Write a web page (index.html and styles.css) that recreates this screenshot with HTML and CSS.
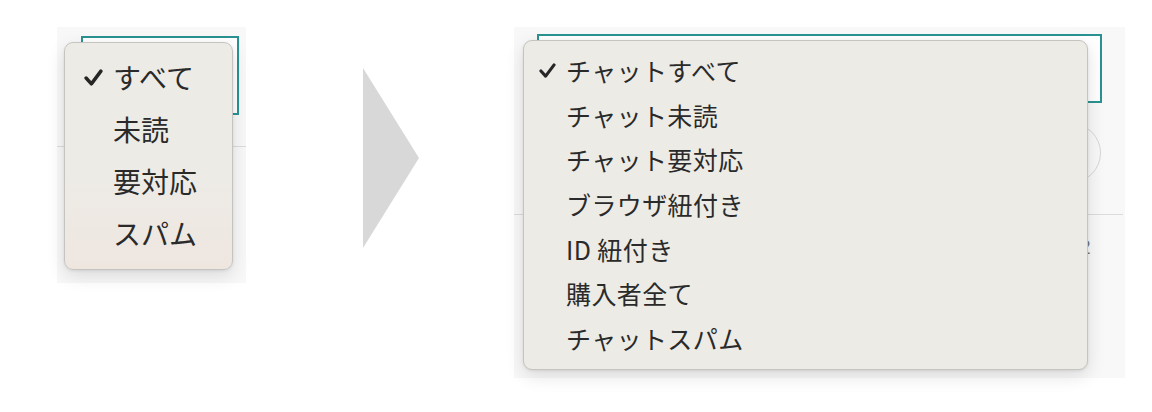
FILE: index.html
```html
<!DOCTYPE html>
<html lang="ja">
<head>
<meta charset="utf-8">
<title>Filter menu</title>
<link rel="stylesheet" href="styles.css">
</head>
<body>
<div class="stage">
  <div class="shot shot-left">
    <div class="field"></div>
    <div class="rule"></div>
    <ul class="menu">
      <li class="item checked"><svg class="check" viewBox="0 0 18 16"><polyline points="2,8.5 7,14 16,2"/></svg>すべて</li>
      <li class="item">未読</li>
      <li class="item">要対応</li>
      <li class="item">スパム</li>
    </ul>
  </div>
  <div class="arrow"></div>
  <div class="shot shot-right">
    <div class="field"></div>
    <div class="circle"></div>
    <div class="rule"></div>
    <span class="count">2</span>
    <ul class="menu">
      <li class="item checked"><svg class="check" viewBox="0 0 18 16"><polyline points="2,8.5 7,14 16,2"/></svg>チャットすべて</li>
      <li class="item">チャット未読</li>
      <li class="item">チャット要対応</li>
      <li class="item">ブラウザ紐付き</li>
      <li class="item">ID 紐付き</li>
      <li class="item">購入者全て</li>
      <li class="item">チャットスパム</li>
    </ul>
  </div>
</div>
</body>
</html>
```

FILE: styles.css
```css
html, body {
  margin: 0;
  padding: 0;
  background: #ffffff;
}
body {
  width: 1152px;
  height: 412px;
  overflow: hidden;
  font-family: "Noto Sans CJK JP", "Noto Sans", sans-serif;
  color: #2a2a2a;
}
.stage {
  display: flex;
  align-items: flex-start;
  padding-left: 57px;
  padding-top: 27px;
}
.shot {
  position: relative;
  background: #f8f8f8;
  flex: none;
}
.shot-left {
  width: 189px;
  height: 256px;
}
.shot-right {
  width: 611px;
  height: 351px;
  margin-left: 95px;
}
.arrow {
  flex: none;
  width: 56px;
  height: 180px;
  margin-left: 117px;
  margin-top: 41px;
  background: #d8d8d8;
  clip-path: polygon(0 0, 100% 50%, 0 100%);
}
.field {
  position: absolute;
  background: #ffffff;
  border: 2px solid #2a9292;
  box-sizing: border-box;
}
.shot-left .field {
  left: 24px;
  top: 9px;
  width: 158px;
  height: 79px;
}
.shot-right .field {
  left: 23px;
  top: 7px;
  width: 565px;
  height: 69px;
}
.rule {
  position: absolute;
  left: 0;
  height: 1px;
  background: #dcdcdc;
}
.shot-left .rule {
  top: 119px;
  width: 189px;
}
.shot-right .rule {
  top: 187px;
  width: 609px;
}
.circle {
  position: absolute;
  left: 527px;
  top: 96px;
  width: 60px;
  height: 60px;
  border: 1px solid #d6d6d6;
  border-radius: 50%;
  box-sizing: border-box;
}
.count {
  position: absolute;
  left: 565px;
  top: 208px;
  font-family: "Liberation Sans", sans-serif;
  font-size: 21px;
  color: #777777;
}
.menu {
  position: absolute;
  margin: 0;
  list-style: none;
  box-sizing: border-box;
  background: #edebe6;
  border: 1px solid #c6c4c0;
  border-radius: 9px;
  box-shadow: 0 6px 18px rgba(0, 0, 0, 0.12), 0 1px 3px rgba(0, 0, 0, 0.08);
}
.shot-left .menu {
  left: 7px;
  top: 15px;
  width: 169px;
  height: 228px;
  padding: 8px 0 0 48px;
  background: linear-gradient(to bottom, #edebe6 0%, #edebe6 60%, #efe6e0 100%);
}
.shot-right .menu {
  left: 9px;
  top: 13px;
  width: 565px;
  height: 330px;
  padding: 7px 0 0 42px;
}
.item {
  position: relative;
  display: flex;
  align-items: center;
  white-space: nowrap;
}
.shot-left .item {
  height: 52px;
  font-size: 28px;
}
.shot-right .item {
  height: 44.6px;
  font-size: 25px;
  letter-spacing: 0.4px;
}
.check {
  position: absolute;
  fill: none;
  stroke: #262626;
  stroke-width: 3.3;
  stroke-linecap: round;
  stroke-linejoin: round;
}
.shot-left .check {
  left: -29px;
  top: 18px;
  width: 19px;
  height: 17px;
}
.shot-right .check {
  left: -27px;
  top: 15px;
  width: 17px;
  height: 15px;
}
```
